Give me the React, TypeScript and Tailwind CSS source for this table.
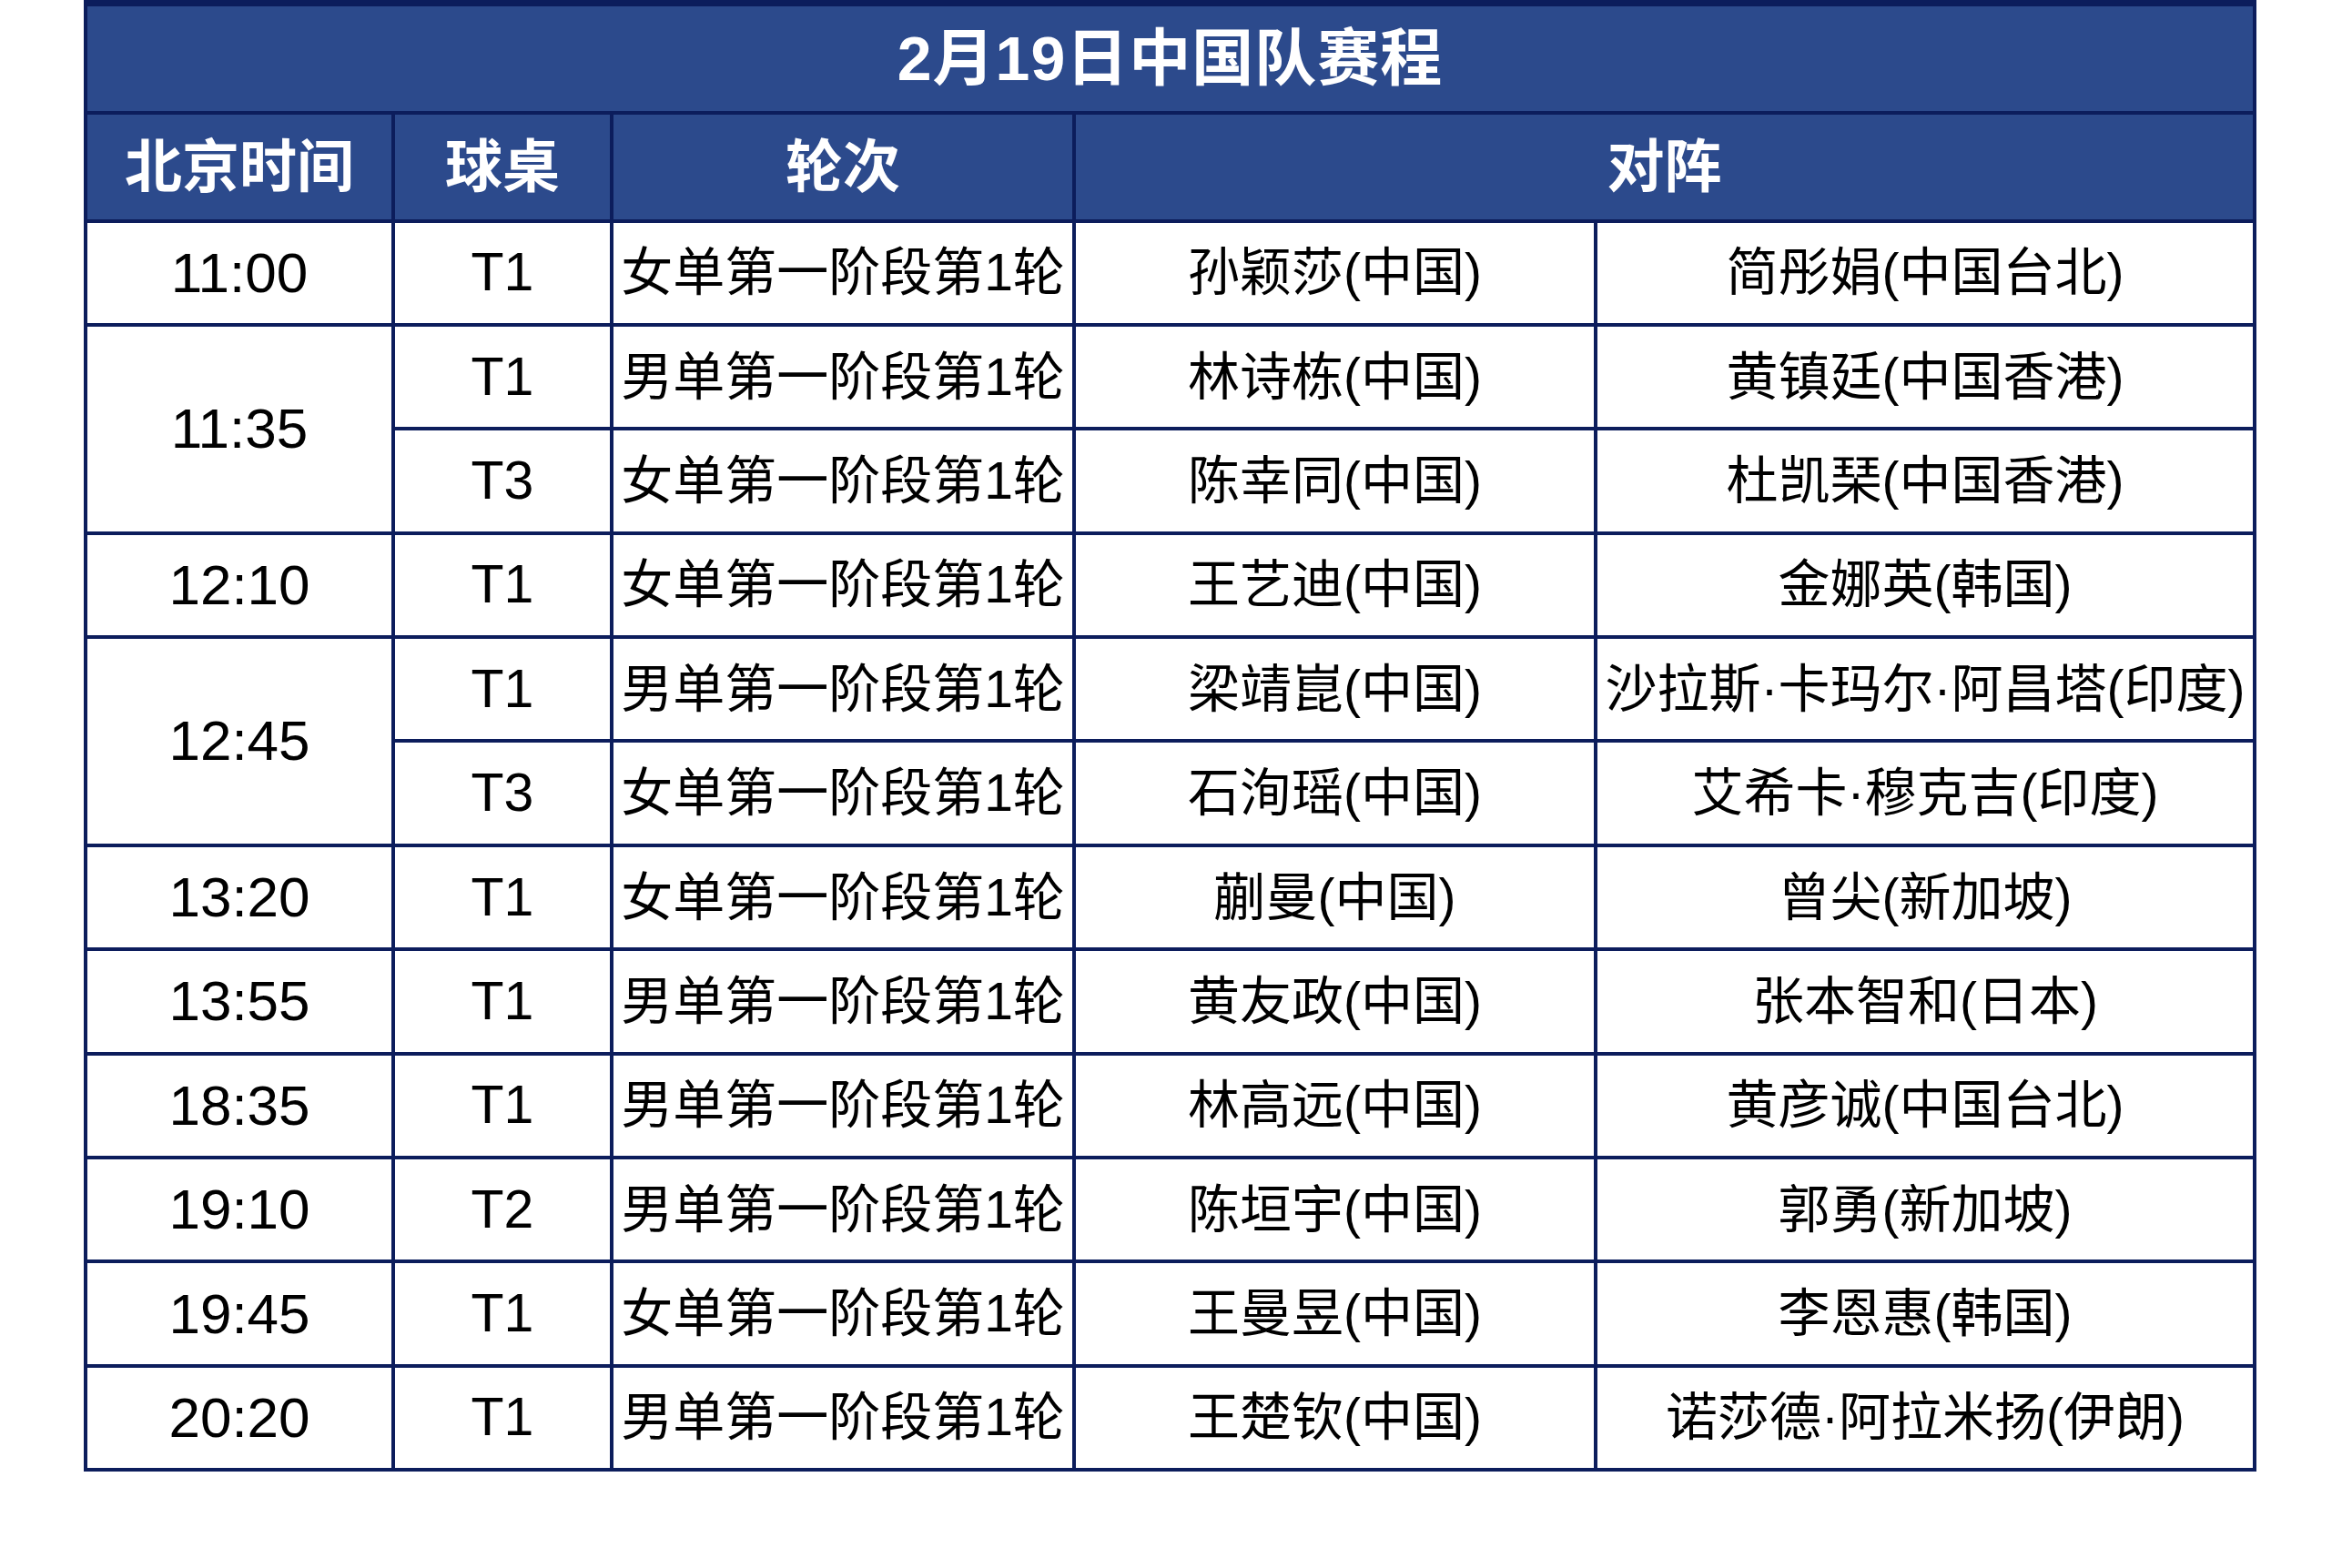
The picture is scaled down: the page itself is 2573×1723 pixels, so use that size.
const rows: { time?: string; span?: number; table: string; round: string; home: string; away: string }[] = [
  { time: "11:00", table: "T1", round: "女单第一阶段第1轮", home: "孙颖莎(中国)", away: "简彤娟(中国台北)" },
  { time: "11:35", span: 2, table: "T1", round: "男单第一阶段第1轮", home: "林诗栋(中国)", away: "黄镇廷(中国香港)" },
  { table: "T3", round: "女单第一阶段第1轮", home: "陈幸同(中国)", away: "杜凯琹(中国香港)" },
  { time: "12:10", table: "T1", round: "女单第一阶段第1轮", home: "王艺迪(中国)", away: "金娜英(韩国)" },
  { time: "12:45", span: 2, table: "T1", round: "男单第一阶段第1轮", home: "梁靖崑(中国)", away: "沙拉斯·卡玛尔·阿昌塔(印度)" },
  { table: "T3", round: "女单第一阶段第1轮", home: "石洵瑶(中国)", away: "艾希卡·穆克吉(印度)" },
  { time: "13:20", table: "T1", round: "女单第一阶段第1轮", home: "蒯曼(中国)", away: "曾尖(新加坡)" },
  { time: "13:55", table: "T1", round: "男单第一阶段第1轮", home: "黄友政(中国)", away: "张本智和(日本)" },
  { time: "18:35", table: "T1", round: "男单第一阶段第1轮", home: "林高远(中国)", away: "黄彦诚(中国台北)" },
  { time: "19:10", table: "T2", round: "男单第一阶段第1轮", home: "陈垣宇(中国)", away: "郭勇(新加坡)" },
  { time: "19:45", table: "T1", round: "女单第一阶段第1轮", home: "王曼昱(中国)", away: "李恩惠(韩国)" },
  { time: "20:20", table: "T1", round: "男单第一阶段第1轮", home: "王楚钦(中国)", away: "诺莎德·阿拉米扬(伊朗)" },
];

const font = { fontFamily: '"Liberation Sans", "Noto Sans CJK SC", sans-serif' };

export default function App() {
  return (
    <div className="min-h-screen bg-white pb-[100px]" style={font}>
      <table className="ml-[92px] w-[2383px] table-fixed border-collapse">
        <colgroup>
          <col className="w-[338px]" />
          <col className="w-[240px]" />
          <col className="w-[508px]" />
          <col className="w-[573px]" />
          <col className="w-[724px]" />
        </colgroup>
        <thead>
          <tr className="h-[120px]">
            <th
              colSpan={5}
              className="border-[4px] border-t-[7px] border-[#0c1d5c] bg-[#2c4a8c] text-center align-middle text-[68px] font-bold leading-none tracking-[1px] text-white"
            >
              2月19日中国队赛程
            </th>
          </tr>
          <tr className="h-[119px]">
            {["北京时间", "球桌", "轮次"].map((h) => (
              <th
                key={h}
                className="border-[4px] border-[#0c1d5c] bg-[#2c4a8c] text-center align-middle text-[63px] font-bold leading-none text-white"
              >
                {h}
              </th>
            ))}
            <th
              colSpan={2}
              className="border-[4px] border-[#0c1d5c] bg-[#2c4a8c] text-center align-middle text-[63px] font-bold leading-none text-white"
            >
              对阵
            </th>
          </tr>
        </thead>
        <tbody>
          {rows.map((r, i) => (
            <tr key={i} className="h-[114.4px] text-black">
              {r.time && (
                <td
                  rowSpan={r.span ?? 1}
                  className="border-[4px] border-[#0c1d5c] text-center align-middle text-[62px] leading-none"
                >
                  {r.time}
                </td>
              )}
              <td className="border-[4px] border-[#0c1d5c] text-center align-middle text-[59px] leading-none">
                {r.table}
              </td>
              <td className="whitespace-nowrap border-[4px] border-[#0c1d5c] text-center align-middle text-[57px] leading-none">
                {r.round}
              </td>
              <td className="whitespace-nowrap border-[4px] border-[#0c1d5c] text-center align-middle text-[57px] leading-none">
                {r.home}
              </td>
              <td className="whitespace-nowrap border-[4px] border-[#0c1d5c] text-center align-middle text-[57px] leading-none">
                {r.away}
              </td>
            </tr>
          ))}
        </tbody>
      </table>
    </div>
  );
}
